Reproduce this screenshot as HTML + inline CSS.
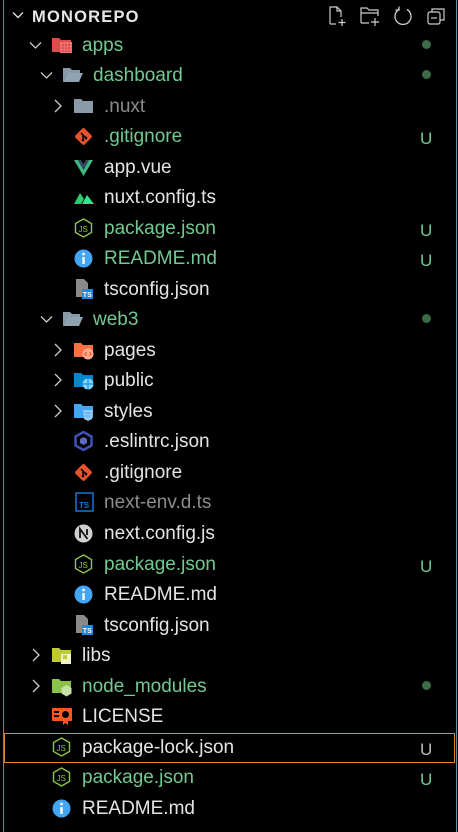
<!DOCTYPE html>
<html><head><meta charset="utf-8"><style>
html,body{margin:0;padding:0;background:#000;width:458px;height:832px;overflow:hidden;font-family:"Liberation Sans",Arial,sans-serif;}
.sb{position:absolute;left:3px;top:0;width:1px;height:832px;background:#5c8aa6;}
.sbr{position:absolute;left:456px;top:0;width:1px;height:832px;background:#5c8aa6;}
.row{position:absolute;left:0;width:458px;height:30px;}
.t{position:absolute;top:5px;font-size:19px;line-height:22px;color:#e4e4e4;white-space:nowrap;}
.g{color:#73c991;}
.d{color:#8c8c8c;}
.ch{position:absolute;top:8px;}
.ic{position:absolute;top:5px;}
.u{position:absolute;left:420px;top:8px;font-size:17px;color:#73c991;}
.dot{position:absolute;left:422px;top:10px;width:9px;height:9px;border-radius:50%;background:#3c6b48;}
.focus{position:absolute;left:4px;top:733px;width:449px;height:28px;border:1px solid #e0891c;}
</style></head><body>
<div class="sb"></div><div class="sbr"></div>
<div class="focus"></div>

<div class="row" style="top:0">
<svg class="ch" style="left:12px;top:9px" width="12" height="12" viewBox="0 0 12 12"><path d="M1 3.5 L6 8.5 L11 3.5" stroke="#ddd" stroke-width="1.4" fill="none"/></svg>
<div class="t" style="left:32px;top:6px;font-size:16.5px;font-weight:bold;color:#e8e8e8;letter-spacing:1.2px">MONOREPO</div>
<svg style="position:absolute;left:326px;top:5px" width="22" height="22" viewBox="0 0 22 22" fill="none" stroke="#ccc" stroke-width="1.2"><path d="M4 19 V2 H11 L15 6 V12 M15 6 H11 V2 M4 19 H10"/><path d="M16 14 V21 M12.5 17.5 H19.5"/></svg>
<svg style="position:absolute;left:358px;top:5px" width="24" height="22" viewBox="0 0 24 22" fill="none" stroke="#ccc" stroke-width="1.2"><path d="M3 18 V3 H9 L11 5 H20 V11 M3 8 H20 M3 18 H11"/><path d="M17 13 V21 M13 17 H21"/></svg>
<svg style="position:absolute;left:392px;top:5px" width="22" height="22" viewBox="0 0 22 22" fill="none" stroke="#ccc" stroke-width="1.3"><path d="M7 4.5 A8 8 0 1 0 15 4.5"/><path d="M7 1.5 V5 H3.5" /></svg>
<svg style="position:absolute;left:425px;top:5px" width="22" height="22" viewBox="0 0 22 22" fill="none" stroke="#ccc" stroke-width="1.2"><rect x="3" y="7" width="12" height="12" rx="2"/><path d="M7 7 V4 H19 V15 H15"/><path d="M6 13 H12"/></svg>
</div>

<div class="row" style="top:30px">
<svg class="ch" style="left:29px;top:9px" width="13" height="12" viewBox="0 0 13 12"><path d="M1 3.5 L6.5 9 L12 3.5" stroke="#ccc" stroke-width="1.3" fill="none"/></svg>
<svg class="ic" style="left:52px;top:6px" width="21" height="18" viewBox="0 0 21 18"><path d="M0 2 H7 L9 4 H19 V16 H0 Z" fill="#e04b4b"/><rect x="8" y="6" width="12" height="11" fill="#f08080"/><path d="M8 9 H20 M8 12 H20 M8 15 H20 M11 6 V17 M14 6 V17 M17 6 V17" stroke="#e04b4b" stroke-width="1"/></svg>
<div class="t g" style="left:82px">apps</div><div class="dot"></div>
</div>

<div class="row" style="top:60px">
<svg class="ch" style="left:40px;top:9px" width="13" height="12" viewBox="0 0 13 12"><path d="M1 3.5 L6.5 9 L12 3.5" stroke="#ccc" stroke-width="1.3" fill="none"/></svg>
<svg class="ic" style="left:63px;top:7px" width="20" height="16" viewBox="0 0 20 16"><path d="M0 1 H7 L9 3 H17 V6 H4 L0 15 Z" fill="#8a9aa8"/><path d="M4 6 H20 L16 15 H0 Z" fill="#8fa3b3"/></svg>
<div class="t g" style="left:93px">dashboard</div><div class="dot"></div>
</div>

<div class="row" style="top:91px">
<svg class="ch" style="left:53px;top:8px" width="10" height="14" viewBox="0 0 10 14"><path d="M2 1 L8 7 L2 13" stroke="#ccc" stroke-width="1.3" fill="none"/></svg>
<svg class="ic" style="left:74px;top:7px" width="19" height="16" viewBox="0 0 19 16"><path d="M0 1 H7 L9 3 H19 V15 H0 Z" fill="#8a9aa8"/></svg>
<div class="t d" style="left:104px">.nuxt</div>
</div>

<div class="row" style="top:121px">
<svg class="ic" style="left:74px;top:6px" width="19" height="19" viewBox="0 0 19 19"><rect x="3" y="3" width="13" height="13" transform="rotate(45 9.5 9.5)" rx="2" fill="#e8522d"/><path d="M7 6 L12 11 M9 8 V13" stroke="#000" stroke-width="1.5"/><circle cx="9" cy="13" r="1.3" fill="#000"/><circle cx="12" cy="11" r="1.3" fill="#000"/></svg>
<div class="t g" style="left:104px">.gitignore</div><div class="u">U</div>
</div>

<div class="row" style="top:152px">
<svg class="ic" style="left:74px;top:7px" width="19" height="17" viewBox="0 0 19 17"><path d="M0 1 H4 L9.5 11 L15 1 H19 L9.5 17 Z" fill="#41b883"/><path d="M4 1 H7 L9.5 5 L12 1 H15 L9.5 11 Z" fill="#35495e"/></svg>
<div class="t" style="left:104px">app.vue</div>
</div>

<div class="row" style="top:182px">
<svg class="ic" style="left:74px;top:8px" width="20" height="14" viewBox="0 0 20 14"><path d="M0 14 L6 3 L10 9 L7 14 Z" fill="#2ecc71"/><path d="M8 14 L13 5 L20 14 Z" fill="#2ee58c"/></svg>
<div class="t" style="left:104px">nuxt.config.ts</div>
</div>

<div class="row" style="top:213px">
<svg class="ic" style="left:74px;top:5px" width="19" height="20" viewBox="0 0 19 20"><path d="M9.5 1 L17.5 5.5 V14.5 L9.5 19 L1.5 14.5 V5.5 Z" fill="none" stroke="#8cc84b" stroke-width="1.4"/><text x="4.5" y="14" font-size="8" font-family="Liberation Sans" fill="#8cc84b">JS</text></svg>
<div class="t g" style="left:104px">package.json</div><div class="u">U</div>
</div>

<div class="row" style="top:243px">
<svg class="ic" style="left:74px;top:6px" width="19" height="19" viewBox="0 0 19 19"><circle cx="9.5" cy="9.5" r="9" fill="#42a5f5"/><rect x="8.3" y="8" width="2.4" height="7" fill="#fff"/><circle cx="9.5" cy="5" r="1.4" fill="#fff"/></svg>
<div class="t g" style="left:104px">README.md</div><div class="u">U</div>
</div>

<div class="row" style="top:274px">
<svg class="ic" style="left:76px;top:5px" width="19" height="20" viewBox="0 0 19 20"><path d="M0 0 H8 L12 4 V18 H0 Z" fill="#8a8a8a"/><rect x="6" y="10" width="11" height="10" fill="#1e88e5"/><text x="6.8" y="18.2" font-size="7" font-weight="bold" font-family="Liberation Sans" fill="#fff">TS</text></svg>
<div class="t" style="left:104px">tsconfig.json</div>
</div>

<div class="row" style="top:304px">
<svg class="ch" style="left:40px;top:9px" width="13" height="12" viewBox="0 0 13 12"><path d="M1 3.5 L6.5 9 L12 3.5" stroke="#ccc" stroke-width="1.3" fill="none"/></svg>
<svg class="ic" style="left:63px;top:7px" width="20" height="16" viewBox="0 0 20 16"><path d="M0 1 H7 L9 3 H17 V6 H4 L0 15 Z" fill="#8a9aa8"/><path d="M4 6 H20 L16 15 H0 Z" fill="#8fa3b3"/></svg>
<div class="t g" style="left:93px">web3</div><div class="dot"></div>
</div>

<div class="row" style="top:335px">
<svg class="ch" style="left:53px;top:8px" width="10" height="14" viewBox="0 0 10 14"><path d="M2 1 L8 7 L2 13" stroke="#ccc" stroke-width="1.3" fill="none"/></svg>
<svg class="ic" style="left:74px;top:7px" width="20" height="18" viewBox="0 0 20 18"><path d="M0 1 H7 L9 3 H19 V15 H0 Z" fill="#ff7043"/><circle cx="14" cy="12" r="5.5" fill="#ffab91"/><path d="M12.5 10 L11 12 L12.5 14 M15.5 10 L17 12 L15.5 14" stroke="#e64a19" stroke-width="1" fill="none"/></svg>
<div class="t" style="left:104px">pages</div>
</div>

<div class="row" style="top:365px">
<svg class="ch" style="left:53px;top:8px" width="10" height="14" viewBox="0 0 10 14"><path d="M2 1 L8 7 L2 13" stroke="#ccc" stroke-width="1.3" fill="none"/></svg>
<svg class="ic" style="left:74px;top:7px" width="20" height="18" viewBox="0 0 20 18"><path d="M0 1 H7 L9 3 H19 V15 H0 Z" fill="#0288d1"/><circle cx="14" cy="12" r="5.5" fill="#81d4fa"/><path d="M8.5 12 H19.5 M14 6.5 V17.5" stroke="#0288d1" stroke-width="0.9"/></svg>
<div class="t" style="left:104px">public</div>
</div>

<div class="row" style="top:396px">
<svg class="ch" style="left:53px;top:8px" width="10" height="14" viewBox="0 0 10 14"><path d="M2 1 L8 7 L2 13" stroke="#ccc" stroke-width="1.3" fill="none"/></svg>
<svg class="ic" style="left:74px;top:7px" width="20" height="18" viewBox="0 0 20 18"><path d="M0 1 H7 L9 3 H19 V15 H0 Z" fill="#42a5f5"/><path d="M9 7 H19 L18 16 L14 18 L10 16 Z" fill="#90caf9"/><path d="M11 10 H17 M11 13 H16" stroke="#42a5f5" stroke-width="1"/></svg>
<div class="t" style="left:104px">styles</div>
</div>

<div class="row" style="top:426px">
<svg class="ic" style="left:74px;top:5px" width="19" height="20" viewBox="0 0 19 20"><path d="M9.5 1 L17.5 5.5 V14.5 L9.5 19 L1.5 14.5 V5.5 Z" fill="none" stroke="#3f51b5" stroke-width="2.5"/><path d="M9.5 6 L13 8 V12 L9.5 14 L6 12 V8 Z" fill="#5c6bc0"/></svg>
<div class="t" style="left:104px">.eslintrc.json</div>
</div>

<div class="row" style="top:457px">
<svg class="ic" style="left:74px;top:6px" width="19" height="19" viewBox="0 0 19 19"><rect x="3" y="3" width="13" height="13" transform="rotate(45 9.5 9.5)" rx="2" fill="#e8522d"/><path d="M7 6 L12 11 M9 8 V13" stroke="#000" stroke-width="1.5"/><circle cx="9" cy="13" r="1.3" fill="#000"/><circle cx="12" cy="11" r="1.3" fill="#000"/></svg>
<div class="t" style="left:104px">.gitignore</div>
</div>

<div class="row" style="top:487px">
<svg class="ic" style="left:75px;top:5px" width="19" height="20" viewBox="0 0 19 20"><rect x="1" y="1" width="17" height="18" fill="none" stroke="#1976d2" stroke-width="1.5"/><text x="4" y="16" font-size="8" font-weight="bold" font-family="Liberation Sans" fill="#1976d2">TS</text></svg>
<div class="t d" style="left:104px">next-env.d.ts</div>
</div>

<div class="row" style="top:518px">
<svg class="ic" style="left:74px;top:6px" width="19" height="19" viewBox="0 0 19 19"><circle cx="9.5" cy="9.5" r="9" fill="#d0d0d0"/><path d="M6 14 V5 L13.5 15 M13 5 V11" stroke="#111" stroke-width="1.8" fill="none"/></svg>
<div class="t" style="left:104px">next.config.js</div>
</div>

<div class="row" style="top:549px">
<svg class="ic" style="left:74px;top:5px" width="19" height="20" viewBox="0 0 19 20"><path d="M9.5 1 L17.5 5.5 V14.5 L9.5 19 L1.5 14.5 V5.5 Z" fill="none" stroke="#8cc84b" stroke-width="1.4"/><text x="4.5" y="14" font-size="8" font-family="Liberation Sans" fill="#8cc84b">JS</text></svg>
<div class="t g" style="left:104px">package.json</div><div class="u">U</div>
</div>

<div class="row" style="top:579px">
<svg class="ic" style="left:74px;top:6px" width="19" height="19" viewBox="0 0 19 19"><circle cx="9.5" cy="9.5" r="9" fill="#42a5f5"/><rect x="8.3" y="8" width="2.4" height="7" fill="#fff"/><circle cx="9.5" cy="5" r="1.4" fill="#fff"/></svg>
<div class="t" style="left:104px">README.md</div>
</div>

<div class="row" style="top:610px">
<svg class="ic" style="left:76px;top:5px" width="19" height="20" viewBox="0 0 19 20"><path d="M0 0 H8 L12 4 V18 H0 Z" fill="#8a8a8a"/><rect x="6" y="10" width="11" height="10" fill="#1e88e5"/><text x="6.8" y="18.2" font-size="7" font-weight="bold" font-family="Liberation Sans" fill="#fff">TS</text></svg>
<div class="t" style="left:104px">tsconfig.json</div>
</div>

<div class="row" style="top:640px">
<svg class="ch" style="left:31px;top:8px" width="10" height="14" viewBox="0 0 10 14"><path d="M2 1 L8 7 L2 13" stroke="#ccc" stroke-width="1.3" fill="none"/></svg>
<svg class="ic" style="left:52px;top:7px" width="21" height="18" viewBox="0 0 21 18"><path d="M0 1 H7 L9 3 H19 V15 H0 Z" fill="#c0ca33"/><rect x="9" y="7" width="10" height="10" fill="#f0f4c3"/><rect x="11" y="8" width="4" height="4" fill="#c0ca33"/></svg>
<div class="t" style="left:82px">libs</div>
</div>

<div class="row" style="top:671px">
<svg class="ch" style="left:31px;top:8px" width="10" height="14" viewBox="0 0 10 14"><path d="M2 1 L8 7 L2 13" stroke="#ccc" stroke-width="1.3" fill="none"/></svg>
<svg class="ic" style="left:52px;top:7px" width="21" height="19" viewBox="0 0 21 19"><path d="M0 1 H7 L9 3 H19 V15 H0 Z" fill="#8bc34a"/><path d="M14.5 7 L19.5 10 V15.5 L14.5 18.5 L9.5 15.5 V10 Z" fill="#c5e1a5"/></svg>
<div class="t g" style="left:82px">node_modules</div><div class="dot"></div>
</div>

<div class="row" style="top:701px">
<svg class="ic" style="left:52px;top:7px" width="20" height="18" viewBox="0 0 20 18"><rect x="0" y="0" width="20" height="13" rx="1" fill="#ff5722"/><rect x="2" y="3" width="5" height="2" fill="#000"/><rect x="2" y="7" width="5" height="2" fill="#000"/><circle cx="13.5" cy="6.5" r="3.5" fill="#000"/><path d="M11 12 V17 L13.5 15 L16 17 V12" fill="#ff5722"/></svg>
<div class="t" style="left:82px">LICENSE</div>
</div>

<div class="row" style="top:732px">
<svg class="ic" style="left:52px;top:5px" width="19" height="20" viewBox="0 0 19 20"><path d="M9.5 1 L17.5 5.5 V14.5 L9.5 19 L1.5 14.5 V5.5 Z" fill="none" stroke="#8cc84b" stroke-width="1.4"/><text x="4.5" y="14" font-size="8" font-family="Liberation Sans" fill="#8cc84b">JS</text></svg>
<div class="t" style="left:82px">package-lock.json</div><div class="u" style="color:#bdbdbd">U</div>
</div>

<div class="row" style="top:762px">
<svg class="ic" style="left:52px;top:5px" width="19" height="20" viewBox="0 0 19 20"><path d="M9.5 1 L17.5 5.5 V14.5 L9.5 19 L1.5 14.5 V5.5 Z" fill="none" stroke="#8cc84b" stroke-width="1.4"/><text x="4.5" y="14" font-size="8" font-family="Liberation Sans" fill="#8cc84b">JS</text></svg>
<div class="t g" style="left:82px">package.json</div><div class="u">U</div>
</div>

<div class="row" style="top:793px">
<svg class="ic" style="left:52px;top:6px" width="19" height="19" viewBox="0 0 19 19"><circle cx="9.5" cy="9.5" r="9" fill="#42a5f5"/><rect x="8.3" y="8" width="2.4" height="7" fill="#fff"/><circle cx="9.5" cy="5" r="1.4" fill="#fff"/></svg>
<div class="t" style="left:82px">README.md</div>
</div>
</body></html>
